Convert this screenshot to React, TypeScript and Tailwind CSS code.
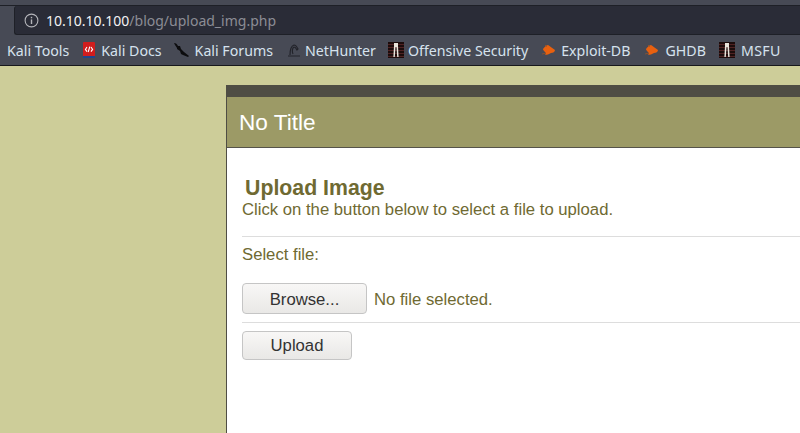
import React from "react";

const Off = () => (
  <svg width="16" height="16" viewBox="0 0 16 16" className="shrink-0">
    <rect width="16" height="16" fill="#1c0c0c" />
    <path d="M0 2.5h16M0 5.5h16M0 8.5h16M0 11.5h16M0 14.5h16" stroke="#4f2222" strokeWidth="1" />
    <path d="M6 1h4v3l.6 11H9.2L8.5 5h-1L6.8 15H5.4L6 4z" fill="#e8e4dc" />
  </svg>
);
const Bug = () => (
  <svg width="14" height="12" viewBox="0 0 14 12" className="shrink-0">
    <path d="M1 5c1-1 3-4 5-4 2 1 4 3 7 5 0 2-2 3-4 3-2 1-4 2-6 2 1-1 1-2 0-3C2 7 1 6 1 5z" fill="#e8600f" />
    <path d="M0 10l4-1M3 1l2 2" stroke="#a8561f" strokeWidth="0.7" />
  </svg>
);
const Book = () => (
  <svg width="12" height="16" viewBox="0 0 12 16" className="shrink-0">
    <rect width="12" height="16" rx="1" fill="#d11d1d" />
    <rect y="14" width="12" height="2" fill="#20458c" />
    <path d="M4 5 2.4 7.4 4 9.6M8 5l1.6 2.4L8 9.6M6.8 4.6 5.2 10" stroke="#fff" strokeWidth="1.1" fill="none" />
  </svg>
);
const Dragon = () => (
  <svg width="16" height="16" viewBox="0 0 16 16" className="shrink-0">
    <path d="M0 1c2 0 3 1 4 3l2 0 1 3 3 3 5 4-1 1-5-2-2-1-1-3-3-2V6L1 3z" fill="#0c0c0e" />
  </svg>
);
const Hunter = () => (
  <svg width="14" height="14" viewBox="0 0 14 14" className="shrink-0">
    <path d="M3 12C3 7 4 3 7 2c2 0 3 2 4 4l-1 1C9 5 8 4 7 4 5 5 5 9 6 11M1 13h12" stroke="#22232a" strokeWidth="1.2" fill="none" />
  </svg>
);

const Mark = ({ icon, label, className }: { icon?: React.ReactNode; label: string; className?: string }) => (
  <div className={`flex items-center ${className ?? ""}`}>
    {icon}
    <span>{label}</span>
  </div>
);

export default function App() {
  return (
    <div className="w-[800px] h-[433px] overflow-hidden flex flex-col bg-[#cdcd99] font-['Liberation_Sans',sans-serif]">
      <div className="h-[66px] shrink-0 bg-[#474a55] border-b border-[#17181c] flex flex-col">
        <div className="h-[5px] shrink-0 border-b border-[#1e2027] box-content" />
        <div className="h-[29px] shrink-0 ml-[14px] rounded-l-[3px] bg-[#2a2c37] border-l border-b border-[#1e2027] flex items-center pl-[9px]">
          <svg width="15" height="15" viewBox="0 0 15 15" className="shrink-0 text-[#b4b5ba]">
            <circle cx="7.5" cy="7.5" r="6.4" stroke="currentColor" strokeWidth="1.1" fill="none" />
            <rect x="6.8" y="6.4" width="1.4" height="4.6" fill="currentColor" />
            <rect x="6.8" y="3.8" width="1.4" height="1.5" fill="currentColor" />
          </svg>
          <span className="ml-[7px] mt-px text-[14px] font-['Noto_Sans',sans-serif] text-[#8c8d95]">
            <span className="text-[#f2f2f4]">10.10.10.100</span>/blog/upload_img.php
          </span>
        </div>
        <div className="flex-1 flex items-center pt-px text-[14.2px] text-[#d6e2ee] font-['Noto_Sans',sans-serif] pl-[7px] whitespace-nowrap">
          <Mark label="Kali Tools" />
          <Mark icon={<Book />} label="Kali Docs" className="ml-[14px] gap-[6px]" />
          <Mark icon={<Dragon />} label="Kali Forums" className="ml-[12px] gap-[5px]" />
          <Mark icon={<Hunter />} label="NetHunter" className="ml-[14px] gap-[4px]" />
          <Mark icon={<Off />} label="Offensive Security" className="ml-[12px] gap-[4px]" />
          <Mark icon={<Bug />} label="Exploit-DB" className="ml-[14px] gap-[5px]" />
          <Mark icon={<Bug />} label="GHDB" className="ml-[15px] gap-[6px]" />
          <Mark icon={<Off />} label="MSFU" className="ml-[13px] gap-[6px] tracking-[0.4px]" />
        </div>
      </div>
      <div className="flex-1 min-h-0 pt-[19px] pl-[226px]">
        <div className="h-full bg-white border-l border-[#4f4d44] flex flex-col">
          <div className="h-[12px] -ml-px shrink-0 bg-[#4f4d44]" />
          <div className="h-[51px] shrink-0 bg-[#9c9a66] border-b border-[#55534a] flex items-center pl-[12px] pt-[2px] text-[22.6px] text-white">
            No Title
          </div>
          <div className="pl-[15px] text-[#6f6a32] text-[16.7px]">
            <div className="pt-[28px] pl-[3px] text-[21.3px] leading-[24px] font-bold">Upload Image</div>
            <div className="leading-[20px] h-[36px]">Click on the button below to select a file to upload.</div>
            <div className="border-t border-[#dddddd] pt-[8px] leading-[20px] h-[47px]">Select file:</div>
            <div className="flex items-center h-[39px] pb-[8px]">
              <div className="w-[125px] h-[31px] pt-[2px] rounded-[4px] border border-[#c5c5c5] bg-linear-to-b from-[#f8f7f6] to-[#e9e8e6] flex items-center justify-center text-[#333333]">Browse...</div>
              <span className="ml-[7px] mt-[2px]">No file selected.</span>
            </div>
            <div className="border-t border-[#dddddd] pt-[8px]">
              <div className="w-[110px] h-[29px] rounded-[4px] border border-[#c5c5c5] bg-linear-to-b from-[#f8f7f6] to-[#e9e8e6] flex items-center justify-center text-[#333333]">Upload</div>
            </div>
          </div>
        </div>
      </div>
    </div>
  );
}
